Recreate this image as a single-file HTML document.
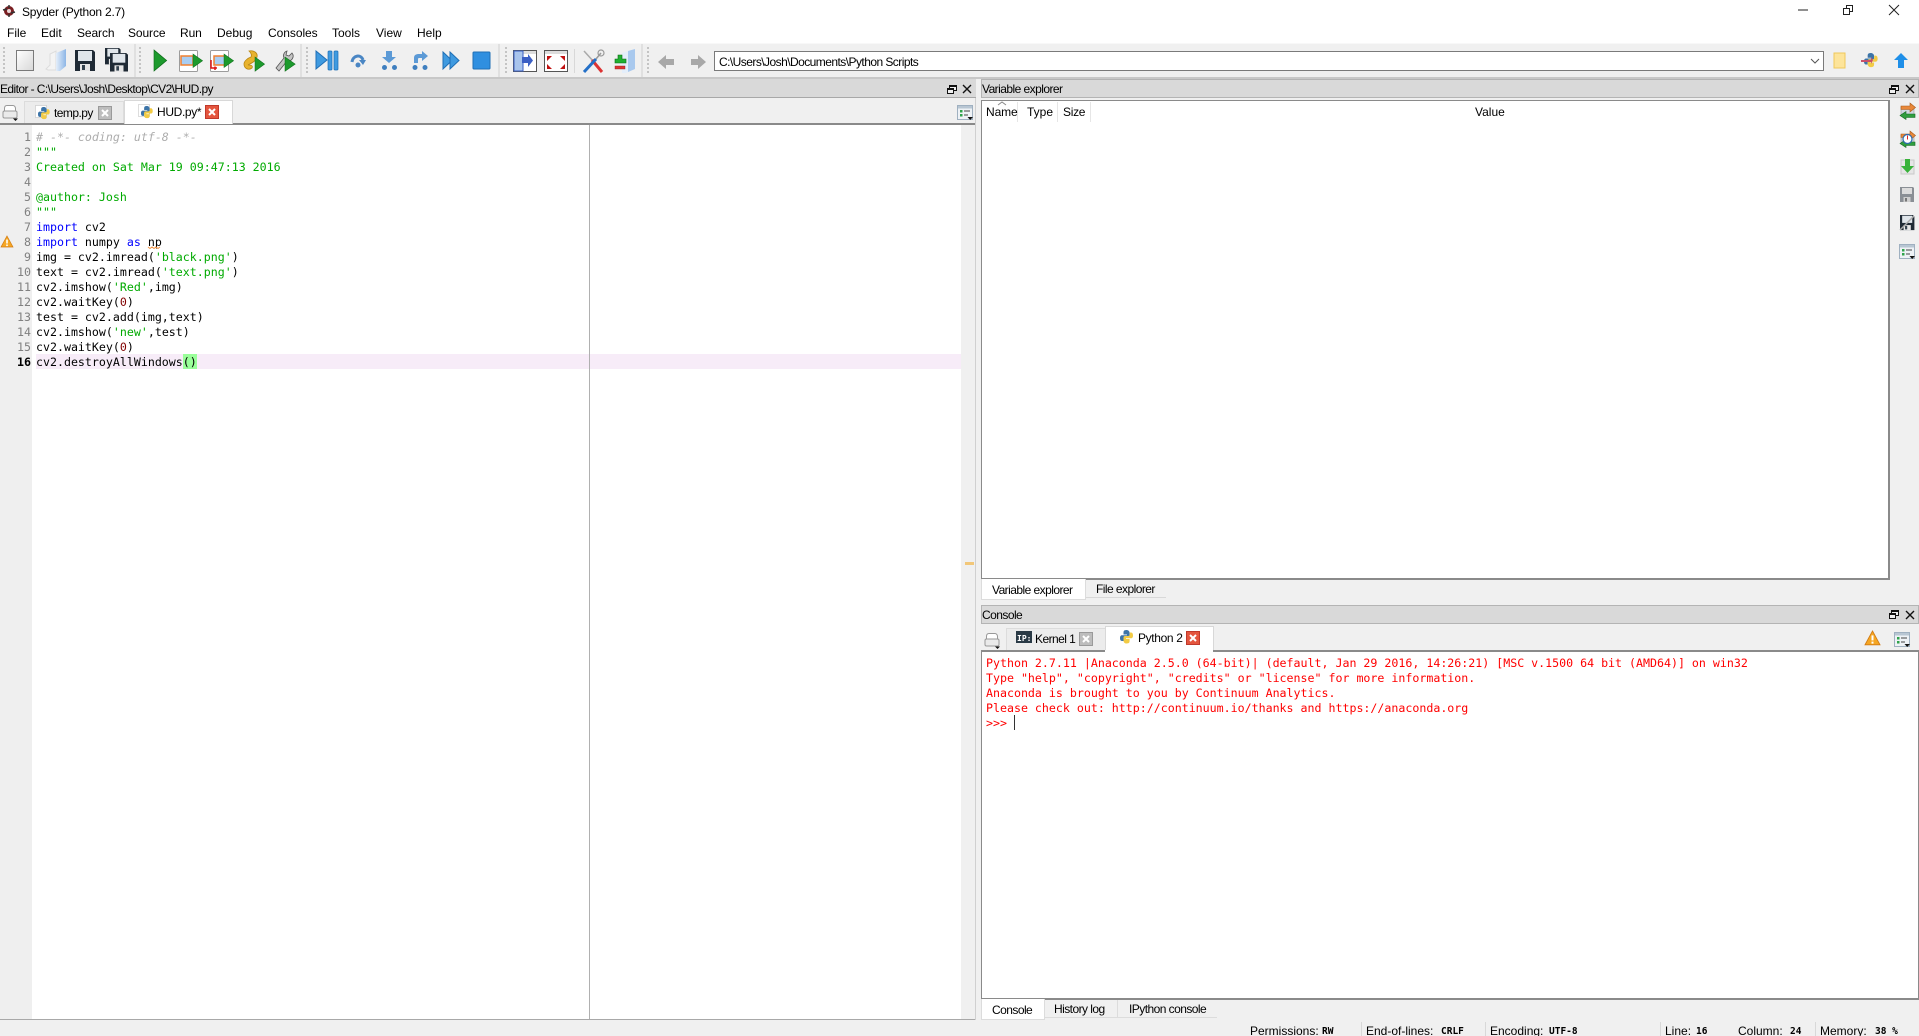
<!DOCTYPE html>
<html><head><meta charset="utf-8"><title>Spyder (Python 2.7)</title>
<style>
html,body{margin:0;padding:0;width:1919px;height:1036px;overflow:hidden;background:#fff}
body{position:relative;font-family:"Liberation Sans",sans-serif;font-size:12px;color:#000}
.b{position:absolute;box-sizing:border-box}
.t{position:absolute;white-space:pre;line-height:16px;height:16px}
.l{letter-spacing:-.55px}
.m{position:absolute;white-space:pre;font-family:"DejaVu Sans Mono","Liberation Mono",monospace;font-size:11.62px;line-height:15px;height:15px}
.n{position:absolute;width:31px;left:0;text-align:right;font-family:"DejaVu Sans Mono",monospace;font-size:11.62px;line-height:15px;color:#808080}
.k{color:#0000ff}.s{color:#00aa00}.c{color:#adadad;font-style:italic}.d{color:#800000}
.r{color:#ff0000;left:986px}
svg{position:absolute;left:0;top:0}
</style></head><body>
<!-- backgrounds -->
<div class="b" style="left:0;top:43px;width:1919px;height:993px;background:#f0f0f0"></div>
<div class="b" style="left:0;top:43px;width:1919px;height:1px;background:#f8f8f8"></div>
<div class="b" style="left:0;top:77px;width:1919px;height:2px;background:#c8c8c8"></div>
<!-- editor -->
<div class="b" style="left:0;top:79px;width:976px;height:19px;background:#d9d9d9;border-bottom:1px solid #a8a8a8"></div>
<div class="b" style="left:0;top:123px;width:976px;height:2px;background:#8a8a8a"></div>
<div class="b" style="left:32px;top:125px;width:929px;height:895px;background:#fff"></div>
<div class="b" style="left:0;top:125px;width:32px;height:895px;background:#efefef"></div>
<div class="b" style="left:36px;top:354px;width:925px;height:15px;background:#f7ecf8"></div>
<div class="b" style="left:183px;top:354px;width:14px;height:15px;background:#99ff99"></div>
<div class="b" style="left:589px;top:125px;width:1px;height:895px;background:#b0b0b0"></div>
<div class="b" style="left:0;top:1019px;width:976px;height:1px;background:#a8a8a8"></div>
<div class="b" style="left:975px;top:98px;width:1px;height:922px;background:#d0d0d0"></div>
<div class="b" style="left:965px;top:562px;width:9px;height:3px;background:#f2c779"></div>
<!-- editor tabs -->
<div class="b" style="left:24px;top:101px;width:100px;height:22px;background:#ececec;border:1px solid #dcdcdc;border-bottom:0"></div>
<div class="b" style="left:124px;top:100px;width:109px;height:24px;background:#fff;border:1px solid #d8d8d8;border-bottom:0"></div>
<!-- variable explorer -->
<div class="b" style="left:981px;top:79px;width:938px;height:19px;background:#d9d9d9;border:1px solid #b4b4b4"></div>
<div class="b" style="left:981px;top:100px;width:909px;height:480px;background:#fff;border:1px solid #8a8a8a;border-width:1px 2px 2px 1px"></div>
<div class="b" style="left:1017px;top:102px;width:1px;height:20px;background:#e6e6e6"></div>
<div class="b" style="left:1057px;top:102px;width:1px;height:20px;background:#e6e6e6"></div>
<div class="b" style="left:1090px;top:102px;width:1px;height:20px;background:#e6e6e6"></div>
<div class="b" style="left:981px;top:579px;width:105px;height:21px;background:#fff;border:1px solid #dcdcdc;border-top:0"></div>
<div class="b" style="left:1086px;top:597px;width:80px;height:1px;background:#d8d8d8"></div>
<!-- console -->
<div class="b" style="left:981px;top:605px;width:938px;height:19px;background:#d9d9d9;border:1px solid #b4b4b4"></div>
<div class="b" style="left:1006px;top:628px;width:100px;height:22px;background:#ececec;border:1px solid #dcdcdc;border-bottom:0"></div>
<div class="b" style="left:1105px;top:626px;width:109px;height:25px;background:#fff;border:1px solid #d8d8d8;border-bottom:0"></div>
<div class="b" style="left:981px;top:650px;width:938px;height:350px;background:#fff;border:1px solid #8a8a8a;border-width:2px 1px 2px 1px"></div>
<div class="b" style="left:1105px;top:650px;width:108px;height:2px;background:#fff"></div>
<div class="b" style="left:981px;top:999px;width:64px;height:21px;background:#fff;border:1px solid #dcdcdc;border-top:0"></div>
<div class="b" style="left:1045px;top:1000px;width:73px;height:18px;border-right:1px solid #dcdcdc;border-bottom:1px solid #dcdcdc"></div>
<div class="b" style="left:1118px;top:1000px;width:99px;height:18px;border-bottom:1px solid #dcdcdc"></div>
<!-- path input -->
<div class="b" style="left:714px;top:51px;width:1110px;height:20px;background:#fff;border:1px solid #7a7a7a"></div>
<!-- status separators -->
<div class="b" style="left:1361px;top:1022px;width:1px;height:14px;background:#d8d8d8"></div>
<div class="b" style="left:1485px;top:1022px;width:1px;height:14px;background:#d8d8d8"></div>
<div class="b" style="left:1660px;top:1022px;width:1px;height:14px;background:#d8d8d8"></div>
<div class="b" style="left:1815px;top:1022px;width:1px;height:14px;background:#d8d8d8"></div>

<!-- chrome text -->
<div class="t" style="left:22px;top:4px;letter-spacing:-.2px">Spyder (Python 2.7)</div>
<div class="t" style="left:7px;top:25px">File</div>
<div class="t" style="left:41px;top:25px">Edit</div>
<div class="t" style="left:77px;top:25px;letter-spacing:-.1px">Search</div>
<div class="t" style="left:128px;top:25px;letter-spacing:-.1px">Source</div>
<div class="t" style="left:180px;top:25px;letter-spacing:-.1px">Run</div>
<div class="t" style="left:217px;top:25px">Debug</div>
<div class="t" style="left:268px;top:25px;letter-spacing:-.05px">Consoles</div>
<div class="t" style="left:332px;top:25px">Tools</div>
<div class="t" style="left:376px;top:25px">View</div>
<div class="t" style="left:417px;top:25px">Help</div>
<div class="t" style="left:0;top:81px;letter-spacing:-.58px">Editor - C:\Users\Josh\Desktop\CV2\HUD.py</div>
<div class="t l" style="left:54px;top:105px">temp.py</div>
<div class="t" style="left:157px;top:104px;letter-spacing:-.35px">HUD.py*</div>
<div class="t l" style="left:982px;top:81px">Variable explorer</div>
<div class="t" style="left:986px;top:104px;letter-spacing:-.1px">Name</div>
<div class="t" style="left:1027px;top:104px">Type</div>
<div class="t" style="left:1063px;top:104px;letter-spacing:-.3px">Size</div>
<div class="t" style="left:1475px;top:104px">Value</div>
<div class="t l" style="left:992px;top:582px">Variable explorer</div>
<div class="t l" style="left:1096px;top:581px">File explorer</div>
<div class="t l" style="left:982px;top:607px">Console</div>
<div class="t l" style="left:1035px;top:631px">Kernel 1</div>
<div class="t" style="left:1138px;top:630px;letter-spacing:-.35px">Python 2</div>
<div class="t l" style="left:992px;top:1002px">Console</div>
<div class="t l" style="left:1054px;top:1001px">History log</div>
<div class="t l" style="left:1129px;top:1001px">IPython console</div>
<div class="t" style="left:719px;top:54px;letter-spacing:-.55px">C:\Users\Josh\Documents\Python Scripts</div>
<!-- status -->
<div class="t" style="left:1250px;top:1023px">Permissions:</div>
<div class="t" style="left:1322px;top:1023px;font:bold 9.5px/17px 'DejaVu Sans Mono',monospace">RW</div>
<div class="t" style="left:1366px;top:1023px">End-of-lines:</div>
<div class="t" style="left:1441px;top:1023px;font:bold 9.5px/17px 'DejaVu Sans Mono',monospace">CRLF</div>
<div class="t" style="left:1490px;top:1023px">Encoding:</div>
<div class="t" style="left:1549px;top:1023px;font:bold 9.5px/17px 'DejaVu Sans Mono',monospace">UTF-8</div>
<div class="t" style="left:1665px;top:1023px">Line:</div>
<div class="t" style="left:1696px;top:1023px;font:bold 9.5px/17px 'DejaVu Sans Mono',monospace">16</div>
<div class="t" style="left:1738px;top:1023px">Column:</div>
<div class="t" style="left:1790px;top:1023px;font:bold 9.5px/17px 'DejaVu Sans Mono',monospace">24</div>
<div class="t" style="left:1820px;top:1023px">Memory:</div>
<div class="t" style="left:1875px;top:1023px;font:bold 9.5px/17px 'DejaVu Sans Mono',monospace">38 %</div>

<!-- line numbers -->
<div class="n" style="top:130px">1</div><div class="n" style="top:145px">2</div><div class="n" style="top:160px">3</div><div class="n" style="top:175px">4</div><div class="n" style="top:190px">5</div><div class="n" style="top:205px">6</div><div class="n" style="top:220px">7</div><div class="n" style="top:235px">8</div><div class="n" style="top:250px">9</div><div class="n" style="top:265px">10</div><div class="n" style="top:280px">11</div><div class="n" style="top:295px">12</div><div class="n" style="top:310px">13</div><div class="n" style="top:325px">14</div><div class="n" style="top:340px">15</div><div class="n" style="top:355px;color:#000;font-weight:bold">16</div>
<!-- code -->
<div class="m c" style="left:36px;top:130px"># -*- coding: utf-8 -*-</div>
<div class="m s" style="left:36px;top:145px">"""</div>
<div class="m s" style="left:36px;top:160px">Created on Sat Mar 19 09:47:13 2016</div>
<div class="m s" style="left:36px;top:190px">@author: Josh</div>
<div class="m s" style="left:36px;top:205px">"""</div>
<div class="m" style="left:36px;top:220px"><span class="k">import</span> cv2</div>
<div class="m" style="left:36px;top:235px"><span class="k">import</span> numpy <span class="k">as</span> np</div>
<div class="m" style="left:36px;top:250px">img = cv2.imread(<span class="s">'black.png'</span>)</div>
<div class="m" style="left:36px;top:265px">text = cv2.imread(<span class="s">'text.png'</span>)</div>
<div class="m" style="left:36px;top:280px">cv2.imshow(<span class="s">'Red'</span>,img)</div>
<div class="m" style="left:36px;top:295px">cv2.waitKey(<span class="d">0</span>)</div>
<div class="m" style="left:36px;top:310px">test = cv2.add(img,text)</div>
<div class="m" style="left:36px;top:325px">cv2.imshow(<span class="s">'new'</span>,test)</div>
<div class="m" style="left:36px;top:340px">cv2.waitKey(<span class="d">0</span>)</div>
<div class="m" style="left:36px;top:355px">cv2.destroyAllWindows()</div>
<!-- console -->
<div class="m r" style="top:656px">Python 2.7.11 |Anaconda 2.5.0 (64-bit)| (default, Jan 29 2016, 14:26:21) [MSC v.1500 64 bit (AMD64)] on win32</div>
<div class="m r" style="top:671px">Type "help", "copyright", "credits" or "license" for more information.</div>
<div class="m r" style="top:686px">Anaconda is brought to you by Continuum Analytics.</div>
<div class="m r" style="top:701px">Please check out: http://continuum.io/thanks and https://anaconda.org</div>
<div class="m r" style="top:716px">&gt;&gt;&gt; </div>
<div class="b" style="left:1014px;top:715px;width:1px;height:15px;background:#333"></div>

<svg width="1919" height="1036" viewBox="0 0 1919 1036" xmlns="http://www.w3.org/2000/svg">
<defs>
<linearGradient id="gp" x1="0" y1="0" x2="1" y2="1"><stop offset="0" stop-color="#fff"/><stop offset="1" stop-color="#d8d8d8"/></linearGradient>
<linearGradient id="gb" x1="0" y1="0" x2="1" y2="0"><stop offset="0" stop-color="#e4eefa"/><stop offset="1" stop-color="#8db6e6"/></linearGradient>
<g id="hd"><rect x="0" y="0" width="2" height="2" fill="#c4c4c4"/><rect x="0" y="4" width="2" height="2" fill="#c4c4c4"/><rect x="0" y="8" width="2" height="2" fill="#c4c4c4"/><rect x="0" y="12" width="2" height="2" fill="#c4c4c4"/><rect x="0" y="16" width="2" height="2" fill="#c4c4c4"/><rect x="0" y="20" width="2" height="2" fill="#c4c4c4"/><rect x="0" y="24" width="2" height="2" fill="#c4c4c4"/></g>
<g id="gr"><path d="M0 0L12 7.500 0 15Z" fill="#1d9a2d" stroke="#0e6e1a" stroke-width=".6"/></g>
<g id="py"><path d="M6.500 0C3.500 0 3.500 1.500 3.500 3V4.500H7V5.200H2C.5 5.200 0 6.500 0 8s.5 3 2 3H3.500V9C3.500 8 4.300 7.500 5 7.500H8C9 7.500 9.600 6.800 9.600 6V3C9.600 1 8 0 6.500 0Z" fill="#3c74a8"/><path d="M6.500 13.500C9.500 13.500 9.600 12 9.600 10.500V9H6V8.300H11C12.500 8.300 13 7 13 5.500S12.500 2.500 11 2.500H9.800V4.500C9.800 5.500 9 6 8 6H5C4 6 3.500 6.700 3.500 7.500V10.500C3.500 12.500 5 13.500 6.500 13.500Z" fill="#f2cb45"/></g>
<g id="xg"><rect x=".5" y=".5" width="13" height="13" fill="#bdbdbd" stroke="#9a9a9a"/><path d="M4 4L10 10M10 4L4 10" stroke="#fff" stroke-width="2"/></g>
<g id="xr"><rect x=".5" y=".5" width="13" height="13" fill="#e4553e" stroke="#c0392b"/><path d="M4 4L10 10M10 4L4 10" stroke="#fff" stroke-width="2"/></g>
<g id="pr"><path d="M2.500 7H13.500V4.500C13.500 2.500 12 1.500 11 1.500H5C3.500 1.500 2.500 2.500 2.500 4.500Z" fill="#fff" stroke="#999"/><rect x="1" y="7" width="14" height="7" rx="1.500" fill="#eaeaea" stroke="#999"/><path d="M11 14.500H16L13.500 17Z" fill="#111"/></g>
<g id="clo"><path d="M1 1L9 9M9 1L1 9" stroke="#111" stroke-width="1.400"/></g>
<g id="undock"><rect x="2.500" y=".5" width="7" height="5" fill="#f0f0f0" stroke="#111"/><rect x="2.500" y=".5" width="7" height="1.500" fill="#111"/><rect x=".5" y="3.500" width="6" height="5" fill="#f0f0f0" stroke="#111"/><rect x=".5" y="3.500" width="6" height="1.500" fill="#111"/></g>
<g id="opts"><rect x=".5" y=".5" width="15" height="14" fill="#eef2f6" stroke="#9fb0c0"/><rect x="1" y="1" width="14" height="2.500" fill="#b8c6d3"/><rect x="3" y="5" width="2.500" height="2.500" fill="#2fa34a"/><rect x="3" y="9" width="2.500" height="2.500" fill="#2fa34a"/><path d="M7 6H13M7 10H11" stroke="#444"/><path d="M10.500 12H16L13.200 15Z" fill="#111"/></g>
<g id="wa"><path d="M6 0L12 11H0Z" fill="#f5a623" stroke="#d17a12" stroke-width=".7"/><rect x="5.200" y="3.500" width="1.600" height="4" fill="#fff"/><rect x="5.200" y="8.500" width="1.600" height="1.600" fill="#fff"/></g>
<g id="disk"><path d="M0 0H18L20 2V21H0Z" fill="#1f2a35"/><rect x="3" y="1" width="14" height="10" fill="#dfe5ea"/><rect x="5" y="14" width="10" height="7" fill="#e6e6e6"/><rect x="7" y="15" width="3" height="5" fill="#33414d"/></g>
<g id="gdisk"><path d="M0 0H13L14 1V15H0Z" fill="#8a8f95"/><rect x="2" y="1" width="10" height="6" fill="#dcdcdc"/><rect x="3.500" y="10" width="7" height="5" fill="#cfcfcf"/><rect x="5" y="11" width="2" height="3.500" fill="#777"/></g>
<g id="blue"><path d="M0 0L11 9 0 18Z" fill="#3f9ae0" stroke="#1f6fb6"/></g>
<g id="sync"><rect x="1" y="4" width="13" height="9" fill="#cfd8e2" stroke="#8a8a8a" stroke-width=".5"/><path d="M1 3H10V0L15.500 4.500 10 9V6.500H1Z" fill="#e8883a" stroke="#a85a18" stroke-width=".6"/><path d="M15 11H6V8.500L0 12.500 6 16.500V14.500H15Z" fill="#2f9d3f" stroke="#176b24" stroke-width=".6"/></g>
</defs>
<!-- app icon -->
<g transform="translate(3,5)"><circle cx="6" cy="6" r="5" fill="#7a1f22"/><circle cx="6" cy="6" r="2" fill="#e8d8d8"/><path d="M0 5L4 4M8 8L12 7M6 0V3M6 9V12" stroke="#333" stroke-width="1.500"/></g>
<!-- window buttons -->
<path d="M1798 10H1808" stroke="#222"/>
<path d="M1846.500 8V5.500H1852.500V11.500H1849.500" stroke="#222" fill="none"/><rect x="1843.500" y="8.500" width="6" height="6" fill="#fff" stroke="#222"/>
<path d="M1889 5L1899 15M1899 5L1889 15" stroke="#222"/>
<!-- handles -->
<use href="#hd" x="3" y="47"/><use href="#hd" x="139" y="47"/><use href="#hd" x="306" y="47"/><use href="#hd" x="505" y="47"/><use href="#hd" x="647" y="47"/>
<path d="M135 44V77M301 44V77M499 44V77M642 44V77" stroke="#d0d0d0"/>
<path d="M574.500 49V73" stroke="#d8d8d8"/>
<!-- new -->
<rect x="16.500" y="50.500" width="17" height="20" fill="url(#gp)" stroke="#7a7a7a"/>
<!-- open -->
<path d="M46 69L50 65V54L56 51V70H48Z" fill="#f4f4f4" stroke="#dcdcdc"/><path d="M56 53L66 49V66L60 71H56Z" fill="url(#gb)"/>
<!-- save -->
<use href="#disk" x="75" y="50"/>
<!-- save all -->
<use href="#disk" transform="translate(105,48) scale(.78)"/><use href="#disk" transform="translate(110,53) scale(.9,.88)"/>
<!-- run -->
<use href="#gr" transform="translate(154,50) scale(1.050,1.400)"/>
<!-- run file -->
<g transform="translate(179,50)"><rect x=".5" y=".5" width="18" height="21" rx="1" fill="#fff" stroke="#9c9c9c"/><rect x="2" y="6" width="12" height="9" fill="#a9cdf2" stroke="#f08030" stroke-width="1.500"/><use href="#gr" transform="translate(14,4) scale(.8,.9)"/></g>
<g transform="translate(210,50)"><rect x=".5" y=".5" width="18" height="21" rx="1" fill="#fff" stroke="#9c9c9c"/><rect x="4" y="6" width="11" height="9" fill="#a9cdf2" stroke="#f08030" stroke-width="1.500"/><use href="#gr" transform="translate(14,4) scale(.8,.9)"/><path d="M1 10V18H7M5 16.500V20" stroke="#dd1111" stroke-width="1.500" fill="none"/></g>
<!-- rerun -->
<g transform="translate(243,50)"><path d="M6 1C11 0 15 3 14 7C13 11 9 13 5 15 9 15 10 16 9 18 5 21 1 18 1 14 1 11 5 8 8 7 9 5 8 3 6 1Z" fill="#e8b32e" stroke="#b88612" stroke-width=".8"/><use href="#gr" transform="translate(12,7) scale(.8,.95)"/></g>
<!-- config -->
<g transform="translate(275,50)"><path d="M12 1A5 5 0 0 0 9 8L1 18 4 21 12 11A5 5 0 0 0 17 3L14 6 11 5 12 1Z" fill="#c4c4c4" stroke="#555" stroke-width=".8"/><use href="#gr" transform="translate(10,7) scale(.85,.95)"/></g>
<!-- debug -->
<g transform="translate(316,51)"><use href="#blue"/><rect x="12" y="0" width="4" height="19" rx="1" fill="#3f9ae0" stroke="#1f6fb6" stroke-width=".7"/><rect x="18" y="0" width="4" height="19" rx="1" fill="#3f9ae0" stroke="#1f6fb6" stroke-width=".7"/></g>
<!-- step -->
<g transform="translate(350,53)"><path d="M2 9C3 2 11 1 13 7" stroke="#4a86c4" stroke-width="3" fill="none"/><path d="M9 7H16L13 12Z" fill="#4a86c4"/><circle cx="8" cy="12" r="2.500" fill="#4a86c4"/></g>
<g transform="translate(382,51)"><path d="M4 0H10V6H14L7 12 0 6H4Z" fill="#5c9ad6"/><circle cx="2.500" cy="16.500" r="2.500" fill="#3f7fbf"/><circle cx="12.500" cy="16.500" r="2.500" fill="#3f7fbf"/></g>
<g transform="translate(412,51)"><path d="M2 12V7C2 4 4 3 7 3H10V0L16 5 10 10V7H7C6 7 6 8 6 9V12Z" fill="#5c9ad6"/><circle cx="3" cy="16.500" r="2.500" fill="#3f7fbf"/><circle cx="13" cy="16.500" r="2.500" fill="#3f7fbf"/></g>
<g transform="translate(443,52)"><path d="M0 0L9 8.500 0 17Z" fill="#3f9ae0" stroke="#1f6fb6"/><path d="M7 0L16 8.500 7 17Z" fill="#3f9ae0" stroke="#1f6fb6"/></g>
<rect x="473" y="52" width="17" height="17" rx="1" fill="#2f8fe0" stroke="#1f6fb6"/>
<!-- maximize -->
<g transform="translate(513,50)"><rect x=".5" y=".5" width="23" height="21" fill="#fff" stroke="#555"/><rect x="1" y="1" width="22" height="3" fill="#ddd"/><rect x="1" y="1" width="9" height="20" fill="#a9c4ec" stroke="#3b5fc4"/><path d="M9 7H15V4L20 10.500 15 17V13H9Z" fill="#3b5fc4"/></g>
<g transform="translate(544,50)"><rect x=".5" y=".5" width="23" height="21" fill="#fff" stroke="#555"/><rect x="1" y="1" width="22" height="3" fill="#ddd"/><path d="M3 6H8L3 11ZM21 6H16L21 11ZM3 19H8L3 14ZM21 19H16L21 14Z" fill="#c01010"/></g>
<!-- tools -->
<g transform="translate(582,49)"><path d="M2 2L12 13" stroke="#aaa" stroke-width="1.500"/><path d="M10 11L20 23" stroke="#d33" stroke-width="3"/><path d="M14 10L2 23" stroke="#2470c8" stroke-width="3"/><path d="M14 10L19 4" stroke="#999" stroke-width="1.500"/><circle cx="19" cy="4" r="3" fill="none" stroke="#999" stroke-width="1.200"/></g>
<!-- pythonpath -->
<g transform="translate(614,49)"><path d="M8 4L21 0V20L12 24H8Z" fill="#e4eefa"/><path d="M14 2L21 0V20L14 23Z" fill="#a9c9ee"/><path d="M4 6H8V10H12V14H8V14H4V14H1V10H4Z" fill="#20b030" stroke="#0a6a14" stroke-width=".6"/><rect x="1" y="17" width="10" height="3" fill="#dd3333" stroke="#8a1a1a" stroke-width=".4"/></g>
<!-- nav -->
<path d="M658 62L666 55V59H674V65H666V69Z" fill="#a8a8a8"/><path d="M706 62L698 55V59H691V65H698V69Z" fill="#a8a8a8"/>
<path d="M1811 59L1815 63 1819 59" stroke="#555" fill="none"/>
<rect x="1834" y="53" width="11" height="15" fill="#fde49a" stroke="#efc85a"/>
<g transform="translate(1861,53)"><use href="#py" transform="translate(3,0) scale(1.050)"/><path d="M0 7H10V4L12 7 10 11V9H0Z" fill="#c8506a"/></g>
<path d="M1901 53L1908 60H1904V68H1898V60H1894Z" fill="#1f8fe8"/>
<!-- panel controls -->
<use href="#undock" x="947" y="85"/><use href="#clo" x="962" y="84"/>
<use href="#undock" x="1889" y="85"/><use href="#clo" x="1905" y="84"/>
<use href="#undock" x="1889" y="610"/><use href="#clo" x="1905" y="610"/>
<!-- editor tabs icons -->
<use href="#pr" x="2" y="104"/>
<rect x="35.500" y="105.500" width="11" height="12" fill="#fff" stroke="#bbb" stroke-dasharray="1 1"/><use href="#py" transform="translate(38,107) scale(.9)"/><use href="#xg" x="98" y="106"/>
<rect x="138.500" y="104.500" width="11" height="12" fill="#fff" stroke="#bbb" stroke-dasharray="1 1"/><use href="#py" transform="translate(141,106) scale(.9)"/><use href="#xr" x="205" y="105"/>
<use href="#opts" x="957" y="105"/>
<!-- warning, squiggle -->
<use href="#wa" x="1" y="236"/>
<path d="M148 247l2 1.500 2-1.500 2 1.500 2-1.500 2 1.500 2-1.500" stroke="#f09040" fill="none"/>
<!-- sort arrow -->
<path d="M998 105L1002 102 1006 105" stroke="#888" fill="none"/>
<!-- var explorer side toolbar -->
<use href="#sync" x="1900" y="103"/>
<g transform="translate(1900,131)"><use href="#sync"/><circle cx="7.500" cy="8" r="4.500" fill="#fff" stroke="#2e6bb0" stroke-width="1.200"/><path d="M7.500 4.500V8.500" stroke="#d22"/></g>
<g transform="translate(1901,159)"><rect y="1" width="13" height="14" fill="#e6e6e6" stroke="#c8c8c8"/><path d="M4 0H9V7H13L6.500 14 0 7H4Z" fill="#38b23a"/></g>
<use href="#gdisk" x="1900" y="187"/>
<g transform="translate(1900,215)"><use href="#disk" transform="scale(.72)"/><path d="M0 15L14 1" stroke="#aaa" stroke-width="1.500"/></g>
<use href="#opts" x="1899" y="244"/>
<!-- console tabs icons -->
<use href="#pr" x="984" y="632"/>
<rect x="1016" y="631" width="16" height="12" fill="#2a3a46"/>
<text x="1017" y="641" font-family="DejaVu Sans Mono,monospace" font-size="8" font-weight="bold" fill="#fff">IP:</text>
<use href="#xg" x="1079" y="632"/>
<use href="#py" x="1120" y="630"/><use href="#xr" x="1186" y="631"/>
<use href="#wa" transform="translate(1865,631) scale(1.250)"/>
<use href="#opts" x="1894" y="632"/>
</svg>
</body></html>
